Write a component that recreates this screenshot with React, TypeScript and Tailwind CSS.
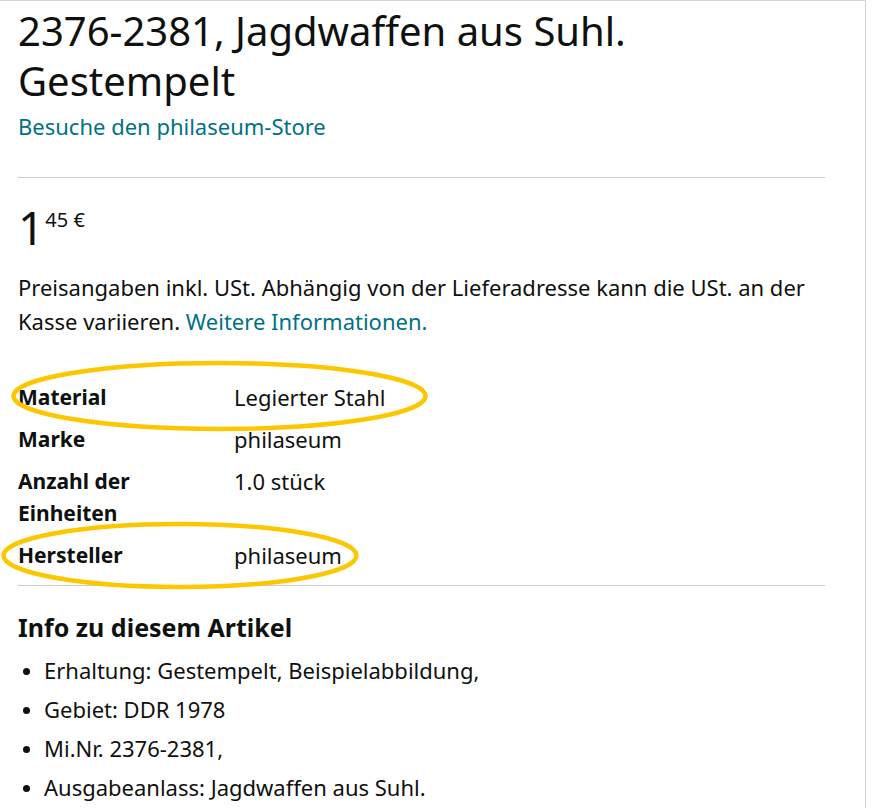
import React from 'react';

const specs = [
  { label: 'Material', value: 'Legierter Stahl' },
  { label: 'Marke', value: 'philaseum' },
  { label: 'Anzahl der Einheiten', value: '1.0 stück' },
  { label: 'Hersteller', value: 'philaseum' },
];

const bullets = [
  'Erhaltung: Gestempelt, Beispielabbildung,',
  'Gebiet: DDR 1978',
  'Mi.Nr. 2376-2381,',
  'Ausgabeanlass: Jagdwaffen aus Suhl.',
];

export default function App() {
  return (
    <div
      className="relative min-h-[808px] w-[866px] border-t border-r border-[#d5d5d5] bg-white pl-[18px] pr-[40px] text-[#0f1111]"
      style={{ fontFamily: '"Noto Sans", "Open Sans", sans-serif' }}
    >
      {/* Title block */}
      <h1 className="pt-[5px] text-[40px] font-normal leading-[50px]">
        2376-2381, Jagdwaffen aus Suhl. Gestempelt
      </h1>
      <a className="mt-[6px] block text-[22px] leading-[28px] text-[#007185]">
        Besuche den philaseum-Store
      </a>

      <div className="mt-[37px] border-t border-[#cccccc]" />

      {/* Price */}
      <div className="mt-[26px] flex items-start">
        <span className="text-[46px] leading-[46px]">1</span>
        <span className="ml-[1px] mt-[6px] text-[20px] leading-[20px]">45 €</span>
      </div>

      <p className="mt-[20px] text-[22px] leading-[34px]">
        Preisangaben inkl. USt. Abhängig von der Lieferadresse kann die USt. an der Kasse variieren.{' '}
        <a className="text-[#007185]">Weitere Informationen.</a>
      </p>

      {/* Specs */}
      <div className="mt-[43px] flex flex-col gap-[10px] pb-[14px]">
        {specs.map((s) => (
          <div key={s.label} className="flex leading-[32px]">
            <div className="w-[216px] pr-[40px] text-[21px] font-bold">{s.label}</div>
            <div className="text-[22px]">{s.value}</div>
          </div>
        ))}
      </div>

      <div className="border-t border-[#cccccc]" />

      {/* About */}
      <h2 className="mt-[25px] text-[25px] font-bold leading-[32px]">Info zu diesem Artikel</h2>
      <ul className="mt-[10px] flex flex-col gap-[5px] pl-[26px]">
        {bullets.map((b) => (
          <li key={b} className="list-disc text-[22px] leading-[34px] marker:text-[20px]">
            {b}
          </li>
        ))}
      </ul>

      {/* Highlight annotations */}
      <svg className="pointer-events-none absolute -left-px -top-px" width="866" height="808">
        <ellipse cx="220.5" cy="396" rx="206" ry="33" fill="none" stroke="#fdc700" strokeWidth="4.5" />
        <ellipse cx="181" cy="555.5" rx="176.5" ry="31.5" fill="none" stroke="#fdc700" strokeWidth="4.5" />
      </svg>
    </div>
  );
}
